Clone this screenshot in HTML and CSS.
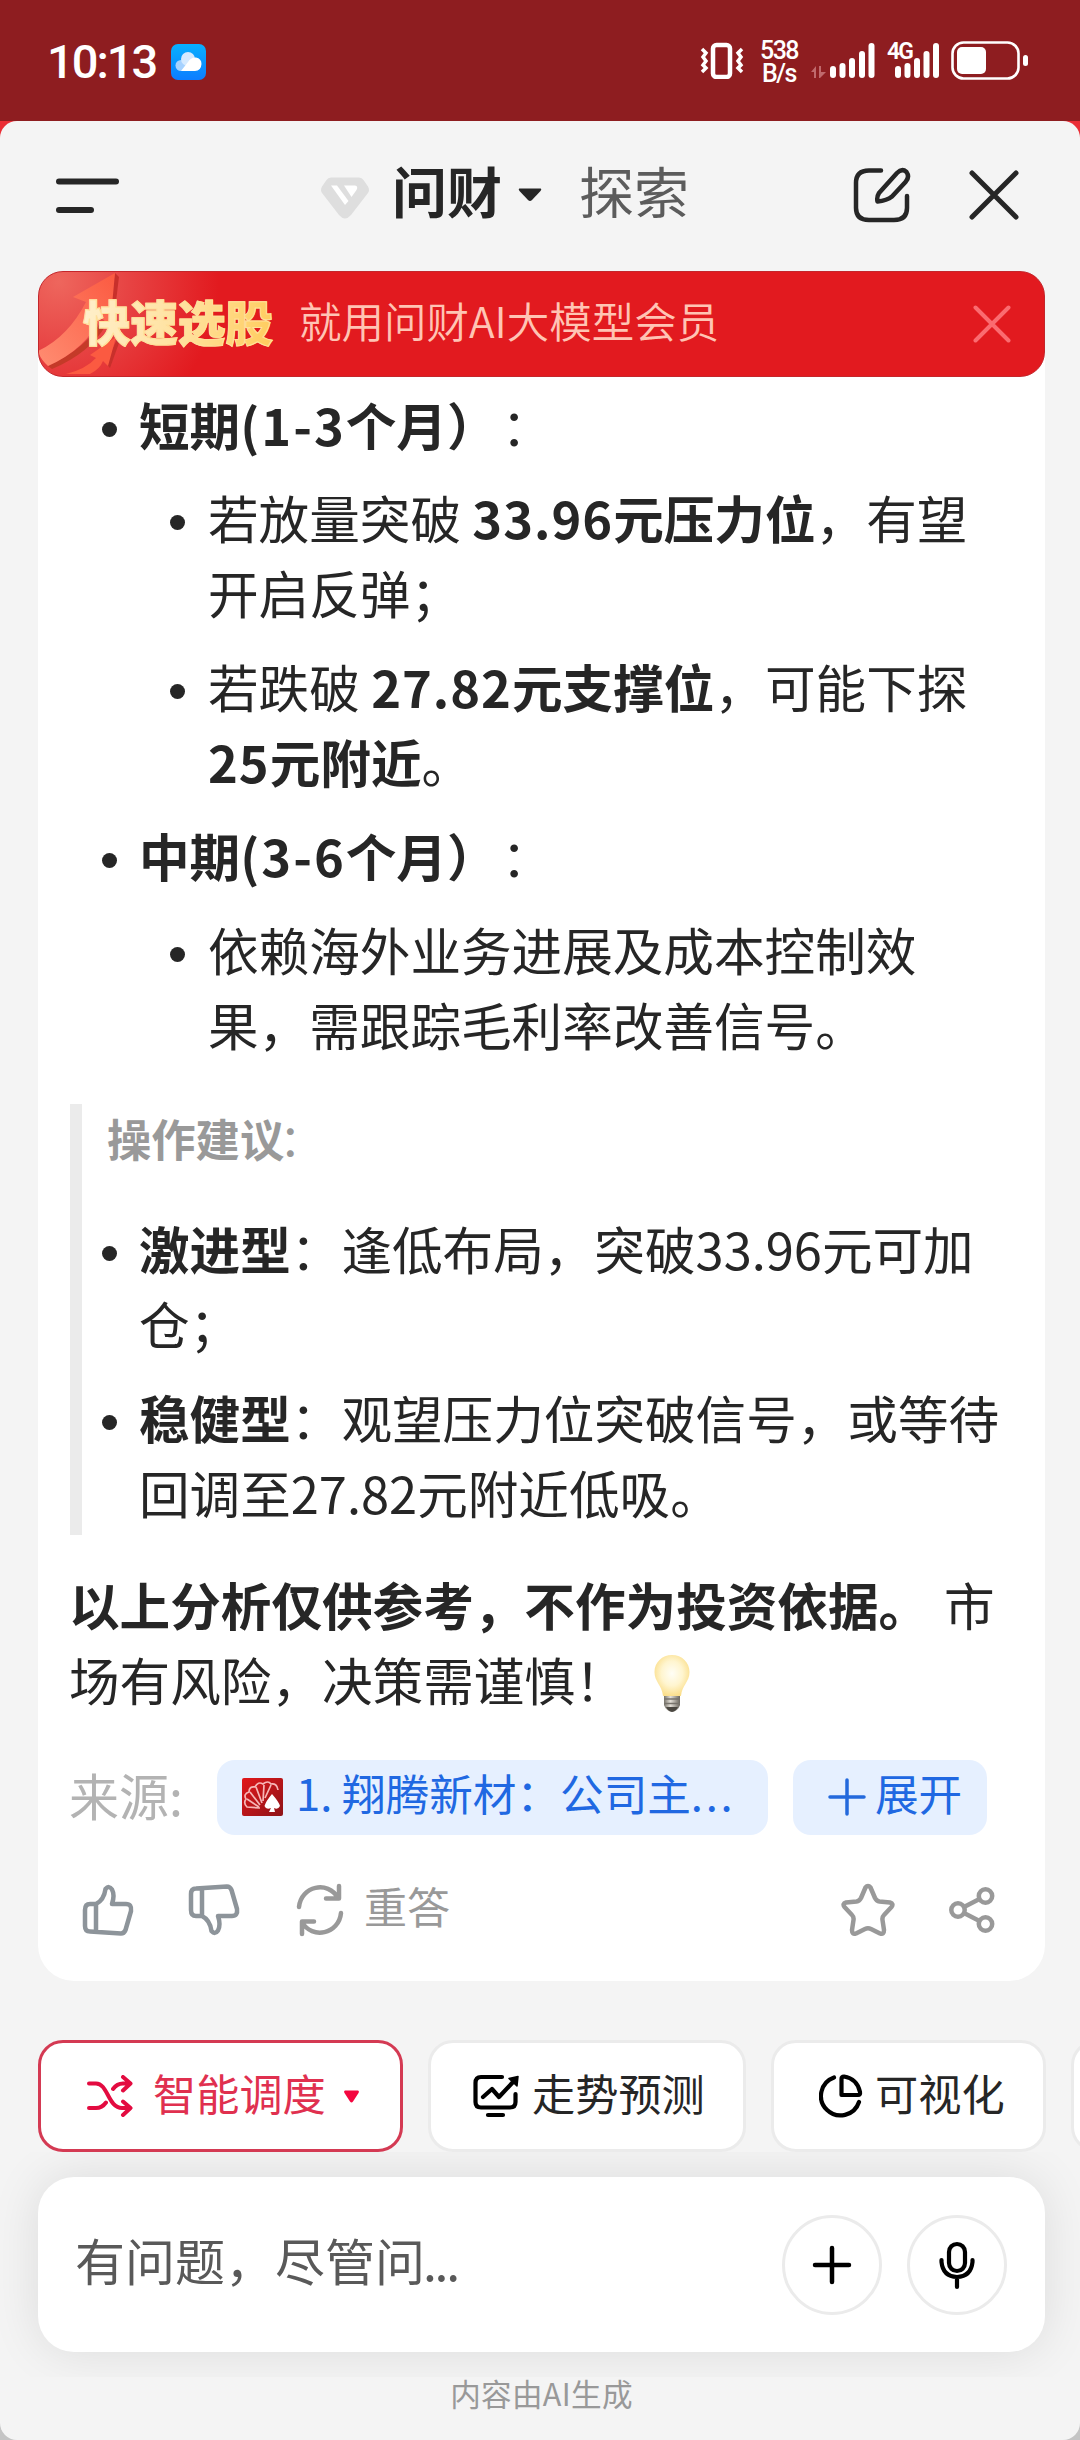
FILE: index.html
```html
<!DOCTYPE html>
<html lang="zh-CN">
<head>
    <meta charset="UTF-8">
    <meta name="viewport" content="width=device-width, initial-scale=1.0">
    <title>问财</title>
    <link rel="stylesheet" href="styles.css">
</head>
<body>
    <!-- Status bar -->
    <div class="status-bar">
        <span class="clock">10:13</span>
        <svg class="cloud-icon" width="35" height="36" viewBox="0 0 35 36">
            <defs>
                <linearGradient id="sky" x1="0" y1="0" x2="0" y2="1">
                    <stop offset="0" stop-color="#08b0ff"/>
                    <stop offset="1" stop-color="#0d7dff"/>
                </linearGradient>
            </defs>
            <rect width="35" height="36" rx="7" fill="url(#sky)"/>
            <circle cx="10" cy="21.500" r="5.500" fill="#a6d2ff"/>
            <circle cx="17" cy="15" r="7" fill="#d5eaff"/>
            <path d="M10 27 L17 18 Q20 13 25 13.500 Q30.500 14.500 30.500 20 Q30 27 24 27 Z" fill="#fff"/>
        </svg>
        <div class="status-right">
            <svg class="vibrate" width="45" height="38" viewBox="0 0 45 38" fill="none" stroke="#fff">
                <rect x="13" y="4" width="17" height="32" rx="3.500" stroke-width="4.500"/>
                <path d="M2 8 L6 12 L3 16 L6 20 L3 24 L6 27 L2 31" stroke-width="3.500"/>
                <path d="M42 8 L38 12 L41 16 L38 20 L41 24 L38 27 L42 31" stroke-width="3.500"/>
            </svg>
            <div class="net-speed">538<br>B/s</div>
            <svg class="signal-one" width="65" height="38" viewBox="0 0 65 38">
                <g fill="#c0696c">
                    <path d="M0 31 L5 25 V37 H3 V31 Z M8 25 H10 V31 H15 L9 37 H8 Z"/>
                </g>
                <g fill="#fff">
                    <rect x="19" y="25" width="6" height="12" rx="3"/>
                    <rect x="28.500" y="22" width="6" height="15" rx="3"/>
                    <rect x="38" y="17" width="6" height="20" rx="3"/>
                    <rect x="48" y="10" width="6" height="27" rx="3"/>
                    <rect x="57.500" y="2" width="6" height="35" rx="3"/>
                </g>
            </svg>
            <div class="signal-two">
                <span class="net-type">4G</span>
                <svg width="53" height="38" viewBox="0 0 53 38" fill="#fff">
                    <rect x="8" y="25" width="6" height="12" rx="3"/>
                    <rect x="17.500" y="22" width="6" height="15" rx="3"/>
                    <rect x="27" y="17" width="6" height="20" rx="3"/>
                    <rect x="36.500" y="10" width="6" height="27" rx="3"/>
                    <rect x="46" y="2" width="6" height="35" rx="3"/>
                </svg>
            </div>
            <svg class="battery" width="78" height="40" viewBox="0 0 78 40">
                <rect x="1.500" y="1.500" width="66" height="36" rx="11" fill="none" stroke="#fff" stroke-width="2.600"/>
                <rect x="6" y="6" width="29" height="27" rx="5" fill="#fff"/>
                <rect x="72" y="14" width="5" height="11" rx="2.500" fill="#fff"/>
            </svg>
        </div>
    </div>

    <div class="sheet-wrap">
    <div class="sheet">
        <!-- Header -->
        <header class="header">
            <svg class="menu-icon" width="63" height="36" viewBox="0 0 63 36" fill="#262626">
                <rect y="0.500" width="63" height="6" rx="3"/>
                <rect y="29" width="38" height="6" rx="3"/>
            </svg>
            <svg class="gem" width="48" height="42" viewBox="0 0 48 42">
                <path d="M10 0.500 H38 Q41 0.500 42.500 3 L47 9.500 Q49 13 47 16 L30 38 Q24 45 18 38 L1 16 Q-1 13 1 9.500 L5.500 3 Q7 0.500 10 0.500 Z" fill="#dedede"/>
                <path d="M10 8.500 H16 L27.500 24 L24 28 Z" fill="#fff"/>
                <path d="M23 8.500 H34 Q37.500 9 35.500 13 L30.500 20 Z" fill="#fff"/>
            </svg>
            <span class="tab tab-active">问财</span>
            <svg class="tab-caret" width="24" height="14" viewBox="0 0 24 14">
                <path d="M1.500 0.500 H22.500 Q24 1 22.500 3 L14 12 Q12 14 10 12 L1.500 3 Q0 1 1.500 0.500 Z" fill="#262626"/>
            </svg>
            <span class="tab">探索</span>
            <svg class="edit-icon" width="58" height="58" viewBox="0 0 58 58" fill="none" stroke="#262626" stroke-width="4.500" stroke-linecap="round">
                <path d="M28 4.500 H16 Q3 4.500 3 17 V42 Q3 54 16 54 H41 Q54 54 54 42 V30" />
                <path d="M26 27 L44 7 Q49 2 53.500 6 Q57 11 52.500 16 L39 30.500 Q34 34.500 24.500 35.500 Q23.500 31 26 27 Z" stroke-linejoin="round"/>
            </svg>
            <svg class="close-icon" width="50" height="50" viewBox="0 0 50 50" fill="none" stroke="#262626" stroke-width="5" stroke-linecap="round">
                <path d="M3 3 L47 47 M47 3 L3 47"/>
            </svg>
        </header>

        <!-- Promo banner -->
        <div class="banner">
            <svg class="banner-arrows" width="100" height="106" viewBox="0 0 100 106">
                <defs>
                    <linearGradient id="arrow" x1="0" y1="1" x2="1" y2="0">
                        <stop offset="0" stop-color="#ff8d72"/>
                        <stop offset="1" stop-color="#fb5a41"/>
                    </linearGradient>
                </defs>
                <path d="M77 2 L81 6 L75 55 L68 52 Z" fill="#c8302b"/>
                <path d="M10 95 Q50 76 63 50 L68 54 Q52 82 14 98 Z" fill="#c43a28"/>
                <path d="M77 2 L35 26 L48 31 Q30 66 0 80 Q2 88 10 95 Q48 78 63 46 L72 56 Z" fill="url(#arrow)"/>
                <path d="M80 66 L81 72 L72 97 L68 92 Z" fill="#c8302b"/>
                <path d="M78 66 L52 84 L58 87 Q48 98 28 103 H52 Q62 98 65 90 L70 95 Z" fill="#fb5a41"/>
            </svg>
            <span class="banner-title">快速选股</span>
            <span class="banner-text">就用问财AI大模型会员</span>
            <svg class="banner-close" width="38" height="38" viewBox="0 0 38 38" fill="none" stroke="#fb6b70" stroke-width="4" stroke-linecap="round">
                <path d="M2.500 2.500 L35.500 35.500 M35.500 2.500 L2.500 35.500"/>
            </svg>
        </div>

        <!-- Answer -->
        <main class="card">
            <ul class="list">
                <li>
                    <div class="item">
                        <strong>短期<span class="period">(1-3</span>个月）</strong><span class="colon">：</span>
                        <ul class="sublist">
                            <li><div class="item">若放量突破 <strong><span class="num">33.96</span>元压力位</strong>，有望<br>开启反弹；</div></li>
                            <li><div class="item">若跌破 <strong><span class="num">27.82</span>元支撑位</strong>，可能下探<br><strong><span class="num">25</span>元附近</strong>。</div></li>
                        </ul>
                    </div>
                </li>
                <li>
                    <div class="item">
                        <strong>中期<span class="period">(3-6</span>个月）</strong><span class="colon">：</span>
                        <ul class="sublist">
                            <li><div class="item">依赖海外业务进展及成本控制效<br>果，需跟踪毛利率改善信号。</div></li>
                        </ul>
                    </div>
                </li>
            </ul>

            <div class="quote">
                <p class="quote-title"><strong>操作建议</strong>：</p>
                <ul class="list quote-list">
                    <li><div class="item"><strong>激进型</strong>：逢低布局，突破33.96元可加<br>仓；</div></li>
                    <li><div class="item"><strong>稳健型</strong>：观望压力位突破信号，或等待<br>回调至27.82元附近低吸。</div></li>
                </ul>
            </div>

            <p class="notice"><strong>以上分析仅供参考，不作为投资依据。</strong><span class="sp"></span>市<br>场有风险，决策需谨慎！<svg class="bulb" width="36" height="58" viewBox="0 0 36 58">
                    <defs>
                        <radialGradient id="glow" cx="0.500" cy="0.450" r="0.550">
                            <stop offset="0" stop-color="#fffef6"/>
                            <stop offset="0.550" stop-color="#fff5cf"/>
                            <stop offset="1" stop-color="#fbdf8d"/>
                        </radialGradient>
                        <linearGradient id="metal">
                            <stop offset="0" stop-color="#77736a"/>
                            <stop offset="0.400" stop-color="#e4e0d8"/>
                            <stop offset="1" stop-color="#6b675f"/>
                        </linearGradient>
                    </defs>
                    <path d="M18 1 C8 1 0.500 8.500 0.500 18 C0.500 28 8 31 9 42 H27 C28 31 35.500 28 35.500 18 C35.500 8.500 28 1 18 1 Z" fill="url(#glow)"/>
                    <path d="M10 42 H26 V51 Q24 57 18 58 Q12 57 10 51 Z" fill="url(#metal)"/>
                    <path d="M10 45 H26 M10 49.500 H26" stroke="#77736c" stroke-width="1.500"/>
                    <path d="M12 53 H24 Q22 57.500 18 58 Q14 57.500 12 53 Z" fill="#4b4842"/>
                </svg></p>

            <div class="sources">
                <span class="sources-label">来源:</span>
                <a class="source source-link">
                    <svg width="41" height="38" viewBox="0 0 41 38">
                        <defs>
                            <linearGradient id="seal" x1="0" y1="0" x2="1" y2="1">
                                <stop offset="0" stop-color="#e2171b"/>
                                <stop offset="1" stop-color="#8e1418"/>
                            </linearGradient>
                        </defs>
                        <rect width="41" height="38" rx="2" fill="url(#seal)"/>
                        <g fill="none" stroke="#f7b6b6" stroke-width="1.700">
                            <path d="M18 30 L5 29 Q1 25 4 21 Q1 16 7 14 Q7 8 13 9 Q16 3 21 6 Q26 2 29 6 Q35 5 36 12"/>
                            <path d="M17 29 L5 21 M18 27 L8 14 M20 25 L14 9 M21 23 L22 7 M23 20 L29 7"/>
                        </g>
                        <path d="M30 16 Q37 24 38 28 Q36 32 32 30 L33 34 H27 L29 30 Q24 32 22.500 28 Q24 23 30 16 Z" fill="#fff"/>
                    </svg>
                    <span>1. 翔腾新材：公司主<i class="dots-wide">...</i></span>
                </a>
                <a class="source source-more">
                    <svg width="38" height="38" viewBox="0 0 38 38" stroke="#2469dc" stroke-width="3.500" stroke-linecap="round">
                        <path d="M2 19 H36 M19 2 V36"/>
                    </svg>
                    <span>展开</span>
                </a>
            </div>

            <div class="actions">
                <svg class="thumb" width="52" height="52" viewBox="0 0 52 52" fill="none" stroke="#8d949a" stroke-width="4.500" stroke-linejoin="round">
                    <path d="M14 20 H8 Q3 20 3 26 V42 Q3 47.500 8 47.500 L39 49.500 Q42 49.500 43.500 46 L49 27 Q50 20 44 20 H30 Q33 11 30 5.500 Q27 1 23.500 5 Q22 16 14 20 V48"/>
                </svg>
                <svg class="thumb thumb-down" width="52" height="52" viewBox="0 0 52 52" fill="none" stroke="#8d949a" stroke-width="4.500" stroke-linejoin="round">
                    <path d="M14 32 H8 Q3 32 3 26 V10 Q3 4.500 8 4.500 L39 2.500 Q42 2.500 43.500 6 L49 25 Q50 32 44 32 H30 Q33 41 30 46.500 Q27 51 23.500 47 Q22 36 14 32 V4"/>
                </svg>
                <svg class="retry" width="48" height="54" viewBox="0 0 48 54" fill="none" stroke="#999" stroke-width="4.500" stroke-linecap="round" stroke-linejoin="round">
                    <path d="M3 24 C5 3 32 -3 42 15 M43 3 V15.500 H30"/>
                    <path d="M45 30 C43 51 16 57 6 39 M6 51 V38.500 H18"/>
                </svg>
                <span class="retry-text">重答</span>
                <svg class="star" width="54" height="54" viewBox="0 0 54 54" fill="none" stroke="#999" stroke-width="4.500" stroke-linejoin="round">
                    <path d="M24.500 4.500 Q27 1.500 29.500 4.500 L34 15 Q35.500 18 38.500 18.500 L49 19.500 Q53 20.500 50.500 24 L43 32 Q41 34 41.500 37 L43 47 Q43 52 39 50.500 L30 46 Q27 44.500 24 46 L15 50.500 Q11 52 11 47 L12.500 37 Q13 34 11 32 L3.500 24 Q1 20.500 5 19.500 L15.500 18.500 Q18.500 18 20 15 Z"/>
                </svg>
                <svg class="share" width="46" height="48" viewBox="0 0 46 48" fill="none" stroke="#999" stroke-width="4.500">
                    <circle cx="9" cy="24" r="6.700"/>
                    <circle cx="36.500" cy="10" r="6.700"/>
                    <circle cx="36.500" cy="38" r="6.700"/>
                    <path d="M15 21 L30.500 13 M15 27 L30.500 35"/>
                </svg>
            </div>
        </main>

        <!-- Modes -->
        <nav class="modes">
            <div class="mode mode-active">
                <svg width="46" height="42" viewBox="0 0 46 42" fill="none" stroke="#e30b40" stroke-width="4" stroke-linecap="round" stroke-linejoin="round">
                    <path d="M2 8.500 H9 C21 8.500 21 33 35 33 H43 M2 33 H9 Q15 33 19 27.500 M26 14 Q30 8.500 36 8.500 H43 M36 2 L43.500 8.500 L36 15.500 M36 26.500 L43.500 33 L36 40"/>
                </svg>
                <span>智能调度</span>
                <svg class="mode-caret" width="15" height="13" viewBox="0 0 15 13">
                    <path d="M1 0.500 H14 Q15.500 1 14.500 3 L9 11.500 Q7.500 13.500 6 11.500 L0.500 3 Q-0.500 1 1 0.500 Z" fill="#f4063f"/>
                </svg>
            </div>
            <div class="mode mode-trend">
                <svg width="48" height="46" viewBox="0 0 48 46" fill="none" stroke="#000" stroke-width="4.200" stroke-linecap="round" stroke-linejoin="round">
                    <path d="M29 4 H8 Q2.500 4 2.500 10 V29 Q2.500 34.500 8 34.500 H37 Q42.500 34.500 42.500 29 V21 M15 42 H30"/>
                    <path d="M10 24 L19 16 L26 24 L41 8"/>
                    <path d="M36 5.500 L45 3.500 L44 13 Z" fill="#000" stroke-width="1.500"/>
                </svg>
                <span>走势预测</span>
            </div>
            <div class="mode mode-chart">
                <svg width="44" height="44" viewBox="0 0 44 44" fill="none" stroke="#000" stroke-width="4.200" stroke-linecap="round" stroke-linejoin="round">
                    <path d="M15 3.500 A19.500 19.500 0 1 0 40 28"/>
                    <path d="M22.500 5 V21 H39 Q41.500 21 41 18 Q38 4.500 25 2.500 Q22.500 2.500 22.500 5 Z"/>
                </svg>
                <span>可视化</span>
            </div>
            <div class="mode mode-next"></div>
        </nav>

        <!-- Input -->
        <div class="composer">
            <div class="input-box">
                <span class="placeholder">有问题，尽管问<i class="dots-tight">...</i></span>
                <button class="round-btn">
                    <svg width="40" height="40" viewBox="0 0 40 40" stroke="#000" stroke-width="4.500" stroke-linecap="round">
                        <path d="M3 20 H37 M20 3 V37"/>
                    </svg>
                </button>
                <button class="round-btn">
                    <svg width="40" height="50" viewBox="0 0 40 50" fill="none" stroke="#000" stroke-width="4.200" stroke-linecap="round">
                        <rect x="12" y="4" width="16" height="27" rx="8"/>
                        <path d="M4.500 20 V22 Q6 36.500 20 37 Q34 36.500 35.500 22 V20 M20 38 V47"/>
                    </svg>
                </button>
            </div>
        </div>

        <footer class="footer">内容由AI生成</footer>
    </div>
    </div>
</body>
</html>
```
FILE: styles.css
```css
* {
    margin: 0;
    padding: 0;
    box-sizing: border-box;
}

body {
    width: 1080px;
    height: 2440px;
    font-family: 'Noto Sans CJK SC', sans-serif;
    color: #262626;
    text-spacing-trim: space-all;
    white-space: nowrap;
    overflow: hidden;
}

svg {
    display: block;
    flex-shrink: 0;
}

i {
    font-style: normal;
}

/* Status bar */
.status-bar {
    height: 121px;
    padding-left: 47px;
    background-color: #8e1d20;
    display: flex;
    align-items: flex-start;
    color: #fff;
    font-family: Roboto, sans-serif;
}

.clock {
    width: 124px;
    margin-top: 34px;
    font-size: 47px;
    line-height: 55px;
    font-weight: 500;
    letter-spacing: -2px;
}

.cloud-icon {
    margin-top: 44px;
}

.status-right {
    display: flex;
    margin-left: auto;
    margin-top: 41px;
    padding-right: 51px;
}

.net-speed {
    width: 40px;
    margin: -2px 0 0 14px;
    text-align: center;
    font-size: 25px;
    line-height: 23px;
    font-weight: 500;
    letter-spacing: -1.500px;
}

.signal-one {
    margin-left: 12px;
}

.signal-two {
    position: relative;
    margin-left: 11px;
}

.net-type {
    position: absolute;
    left: 0;
    top: -1px;
    font-size: 23px;
    line-height: 24px;
    font-weight: 600;
    letter-spacing: -2px;
}

.battery {
    margin-left: 11px;
}

/* Sheet */
.sheet-wrap {
    height: 2319px;
    background: linear-gradient(#ea2d35 0, #ea2d35 60px, #c4c4c4 61px);
}

.sheet {
    height: 2319px;
    background-color: #f4f4f4;
    border-radius: 17px;
    overflow: hidden;
}

.header {
    height: 150px;
    padding-left: 56px;
    display: flex;
    align-items: flex-start;
}

.menu-icon {
    margin-top: 57px;
}

.gem {
    margin: 56px 23px 0 202px;
}

.tab {
    width: 110px;
    font-size: 55px;
    line-height: 80px;
    margin-top: 28px;
    color: #5c5c5c;
}

.tab-active {
    color: #262626;
    font-weight: 700;
}

.tab-caret {
    margin: 67px 37px 0 16px;
}

.edit-icon {
    margin: 45px 0 0 164px;
}

.close-icon {
    margin: 49px 0 0 58px;
}

/* Banner */
.banner {
    position: relative;
    z-index: 1;
    width: 1007px;
    height: 106px;
    margin-left: 38px;
    padding-left: 44px;
    border-radius: 25px;
    border: 1px solid #c4262b;
    background: radial-gradient(circle at 20px 10px, #ee665d 0, #e74343 70px, #e21a1f 160px);
    display: flex;
    align-items: center;
    overflow: hidden;
}

.banner-arrows {
    position: absolute;
    left: -1px;
    top: -1px;
}

.banner-title {
    position: relative;
    width: 216px;
    font-size: 47.500px;
    line-height: 70px;
    font-weight: 900;
    background: linear-gradient(100deg, #fff0cc 0%, #ffe09a 50%, #ffcd60 85%);
    -webkit-background-clip: text;
    background-clip: text;
    color: transparent;
    -webkit-text-stroke: 1px #ffe09a;
    margin-top: -6px;
}

.banner-text {
    font-size: 42.500px;
    line-height: 64px;
    font-weight: 350;
    color: #ffc4b4;
    margin-top: -8px;
}

.banner-close {
    margin-left: auto;
    margin-right: 33px;
}

/* Answer card */
.card {
    width: 1007px;
    height: 1631px;
    margin: -27px 0 0 38px;
    padding: 36.500px 0 0 31px;
    background-color: #fff;
    border-radius: 0 0 36px 36px;
    font-size: 50.600px;
    line-height: 75.200px;
}

.list {
    list-style: none;
    padding-left: 33px;
}

.list li {
    display: flex;
    margin-bottom: 18.500px;
}

.list li::before {
    content: "";
    flex-shrink: 0;
    width: 15px;
    height: 15px;
    margin: 35px 22px 0 0;
    border-radius: 50%;
    background-color: #262626;
}

.sublist {
    list-style: none;
    margin-top: 18.500px;
    padding-left: 31px;
}

.list .sublist li::before {
    margin-right: 23px;
}

.list li:last-child {
    margin-bottom: 0;
}

.period {
    letter-spacing: 2px;
}

.colon {
    margin-left: 4px;
}

.num {
    letter-spacing: 1px;
}

.quote {
    height: 431px;
    margin: 42px 0 0 1px;
    border-left: 12px solid #ebebeb;
}

.quote-title {
    padding: 1px 0 0 25px;
    font-size: 44.300px;
    line-height: 66px;
    color: #999;
}

.quote-title strong {
    margin-right: -5px;
}

.quote-list {
    margin-top: 40px;
    padding-left: 20px;
}

.notice {
    margin-top: 32px;
}

.sp {
    display: inline-block;
    width: 15px;
}

.bulb {
    display: inline-block;
    vertical-align: -11px;
    margin-left: 28px;
}

/* Sources */
.sources {
    display: flex;
    align-items: center;
    height: 75px;
    margin-top: 42px;
}

.sources-label {
    width: 148px;
    font-size: 50px;
    color: #b3b3b3;
    margin-top: -5px;
}

.source {
    display: flex;
    align-items: center;
    height: 75px;
    border-radius: 18px;
    background-color: #e6f0ff;
    color: #2068e2;
    font-size: 43.600px;
}

.source span {
    margin-top: -8px;
}

.source-link {
    width: 551px;
    padding-left: 25px;
    gap: 13px;
}

.dots-wide {
    letter-spacing: 2.700px;
}

.source-more {
    width: 194px;
    margin-left: 25px;
    padding-left: 35px;
    gap: 9px;
}

/* Actions */
.actions {
    display: flex;
    align-items: center;
    height: 56px;
    margin-top: 47px;
    padding-left: 13px;
}

.thumb-down {
    margin-left: 54px;
}

.retry {
    margin-left: 56px;
}

.retry-text {
    width: 88px;
    margin: -8px 0 0 20px;
    font-size: 43px;
    color: #999;
}

.star {
    margin-left: 389px;
}

.share {
    margin-left: 54px;
}

/* Modes */
.modes {
    display: flex;
    gap: 25px;
    margin-top: 59px;
    padding-left: 38px;
    height: 112px;
}

.mode {
    flex-shrink: 0;
    display: flex;
    align-items: center;
    height: 112px;
    border: 3px solid #ebebeb;
    border-radius: 25px;
    background-color: #fff;
    font-size: 43.200px;
}

.mode span {
    margin-top: -9px;
}

.mode-active {
    width: 365px;
    padding-left: 46px;
    border-color: #d43a53;
    color: #e0304f;
}

.mode-active span {
    margin-left: 20px;
}

.mode-caret {
    margin-left: 18px;
}

.mode-trend {
    width: 318px;
    padding-left: 42px;
    gap: 11px;
}

.mode-chart {
    width: 275px;
    padding-left: 45px;
    gap: 12px;
}

.mode-next {
    width: 200px;
}

/* Input */
.composer {
    height: 225px;
    padding: 25px 35px 0 38px;
    overflow: hidden;
}

.input-box {
    display: flex;
    align-items: center;
    height: 175px;
    padding: 0 38px 0 37px;
    border-radius: 36px;
    background-color: #fff;
    box-shadow: 0 0 50px rgba(0, 0, 0, 0.1);
}

.placeholder {
    flex: 1;
    font-size: 50px;
    color: #595959;
    margin-top: -12px;
}

.dots-tight {
    margin-left: -2px;
    letter-spacing: -2.300px;
}

.round-btn {
    width: 100px;
    height: 100px;
    margin-left: 25px;
    display: flex;
    align-items: center;
    justify-content: center;
    border: 3px solid #ebebeb;
    border-radius: 50%;
    background-color: #fff;
}

.footer {
    text-align: center;
    padding-left: 3px;
    font-size: 30.600px;
    line-height: 32px;
    letter-spacing: 0.300px;
    color: #999;
}
```
